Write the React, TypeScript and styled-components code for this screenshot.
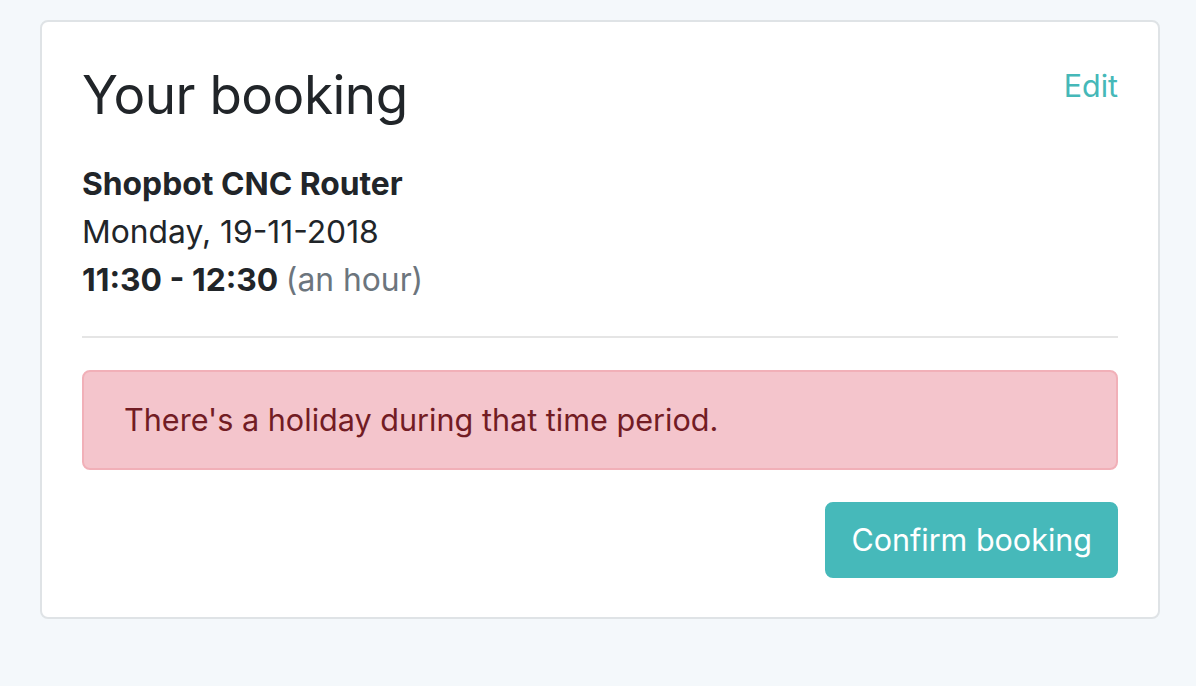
import styled, { createGlobalStyle } from "styled-components";

const GlobalStyle = createGlobalStyle`
  html, body {
    margin: 0;
    padding: 0;
    background: #f4f8fb;
    font-family: Inter, "Noto Sans", "Liberation Sans", sans-serif;
    color: #212529;
  }
`;

const Page = styled.div`
  padding: 20px 40px;
`;

const Card = styled.div`
  box-sizing: border-box;
  width: 1120px;
  background: #fff;
  border: 2px solid #dfe3e6;
  border-radius: 8px;
  padding: 40px 40px 39px;
`;

const Header = styled.div`
  display: flex;
  justify-content: space-between;
  align-items: flex-start;
`;

const Title = styled.h3`
  margin: 0 0 31px;
  font-size: 53px;
  font-weight: 400;
  line-height: 67px;
  letter-spacing: -0.5px;
`;

const EditLink = styled.a`
  color: #45b8b8;
  font-size: 30.5px;
  line-height: 48px;
  text-decoration: none;
  cursor: pointer;
`;

const Details = styled.div`
  font-size: 31.8px;
  line-height: 48px;
`;

const Line = styled.div<{ $bold?: boolean }>`
  font-weight: ${(p) => (p.$bold ? 700 : 400)};
`;

const Muted = styled.span`
  color: #6c757d;
  font-weight: 400;
`;

const Divider = styled.hr`
  border: 0;
  border-top: 2px solid #e5e5e5;
  margin: 32px 0;
`;

const Alert = styled.div`
  background: #f4c5cc;
  border: 2px solid #f1b0b8;
  border-radius: 8px;
  color: #721c24;
  font-size: 30.6px;
  line-height: 48px;
  padding: 24px 40px;
  margin-bottom: 32px;
`;

const Actions = styled.div`
  display: flex;
  justify-content: flex-end;
`;

const Button = styled.button`
  font-family: inherit;
  background: #46b9ba;
  color: #fff;
  border: 2px solid #46b9ba;
  border-radius: 8px;
  font-size: 30.5px;
  line-height: 48px;
  padding: 12px 24px;
  cursor: pointer;
`;

export default function App() {
  return (
    <>
      <GlobalStyle />
      <Page>
        <Card>
          <Header>
            <Title>Your booking</Title>
            <EditLink>Edit</EditLink>
          </Header>
          <Details>
            <Line $bold>Shopbot CNC Router</Line>
            <Line>Monday, 19-11-2018</Line>
            <Line $bold>
              11:30 - 12:30 <Muted>(an hour)</Muted>
            </Line>
          </Details>
          <Divider />
          <Alert>There's a holiday during that time period.</Alert>
          <Actions>
            <Button>Confirm booking</Button>
          </Actions>
        </Card>
      </Page>
    </>
  );
}
